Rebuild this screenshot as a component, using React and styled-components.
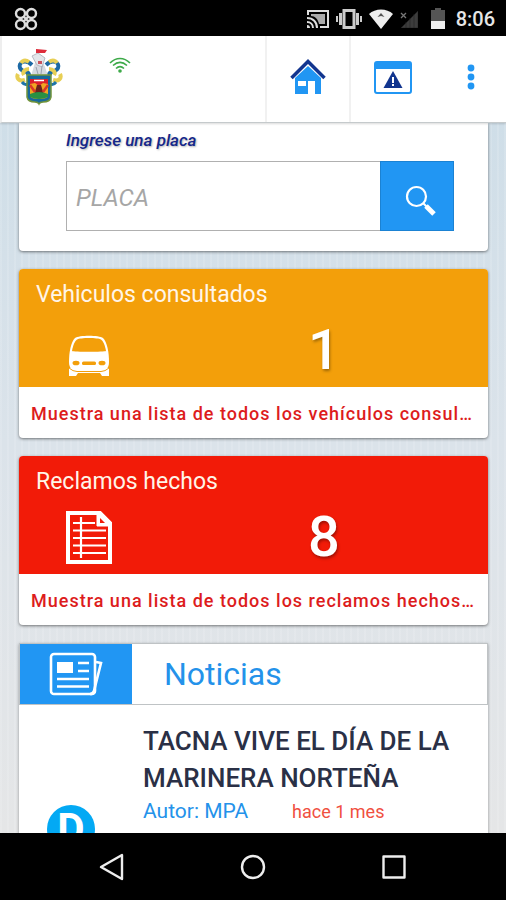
import React from "react";
import styled, { createGlobalStyle } from "styled-components";

const GlobalStyle = createGlobalStyle`
  * { box-sizing: border-box; }
  body { margin: 0; font-family: Roboto, "Noto Sans", sans-serif; }
  button, input { font: inherit; }
  h2, h3, p { margin: 0; }
  svg { display: block; }
`;

const Screen = styled.div`
  display: flex;
  flex-direction: column;
  height: 100vh;
  background: #000;
`;

const StatusBar = styled.div`
  display: flex;
  flex: none;
  align-items: center;
  justify-content: space-between;
  height: 36px;
  padding: 2px 11px 0 13px;
  background: #000;
  color: #e6e6e6;
`;

const StatusIcons = styled.div`
  display: flex;
  align-items: center;
  gap: 6px;
`;

const Clock = styled.time`
  font-size: 20px;
  font-weight: 500;
  line-height: 24px;
`;

const AppBar = styled.header`
  position: relative;
  z-index: 1;
  display: flex;
  flex: none;
  height: 87px;
  background: #fff;
  border-left: 2px solid #eee;
  border-bottom: 1px solid #c5cacc;
  box-shadow: 0 1px 2px rgba(0, 0, 0, 0.15);
`;

const Brand = styled.div`
  display: flex;
  flex: 1;
  align-items: flex-start;
  gap: 45px;
  padding: 12px 0 0 12px;
`;

const Signal = styled.span`
  padding-top: 9px;
`;

const BarButton = styled.button`
  display: flex;
  align-items: center;
  justify-content: center;
  width: ${(p) => p.$width}px;
  padding: 0 0 4px;
  background: none;
  border: 0;
  border-left: ${(p) => (p.$divided ? "2px solid #f1f1f1" : "0")};
`;

const Content = styled.main`
  display: flex;
  flex: 1;
  flex-direction: column;
  gap: 18px;
  min-height: 0;
  overflow-y: auto;
  scrollbar-width: none;
  padding: 0 18px 0 19px;
  background:
    repeating-linear-gradient(90deg, rgba(255, 255, 255, 0.12) 0 2px, transparent 2px 7px),
    linear-gradient(#cfdee8, #dbe3ea 45%, #e5e6e7);
`;

const cardShadow = "0 1px 3px rgba(0, 0, 0, 0.5)";

const SearchCard = styled.form`
  flex: none;
  padding: 7px 34px 20px 47px;
  background: #fff;
  border-radius: 0 0 4px 4px;
  box-shadow: ${cardShadow};
`;

const SearchLabel = styled.label`
  display: block;
  margin-bottom: 11px;
  color: #14278a;
  font-size: 17px;
  font-style: italic;
  font-weight: 500;
  line-height: 20px;
  text-shadow: 1px 1px 2px rgba(0, 0, 0, 0.3);
`;

const SearchRow = styled.div`
  display: flex;
  height: 70px;
`;

const PlateInput = styled.input`
  flex: 1;
  min-width: 0;
  padding: 4px 9px 0;
  background: #fff;
  border: 1px solid #b0b0b0;
  border-right: 0;
  border-radius: 0;
  color: #555;
  font-size: 24px;
  font-style: italic;
  outline: 0;

  &::placeholder {
    color: #a6a6a6;
    opacity: 1;
  }
`;

const SearchButton = styled.button`
  display: flex;
  align-items: center;
  justify-content: center;
  width: 74px;
  padding: 10px 0 0 8px;
  background: #2196f3;
  border: 1px solid #1b82d3;
`;

const StatCard = styled.section`
  flex: none;
  overflow: hidden;
  background: #fff;
  border-radius: 4px;
  box-shadow: ${cardShadow};
`;

const StatHead = styled.div`
  height: 118px;
  padding-top: 13px;
  background: ${(p) => p.$color};
  color: #fff;
`;

const StatTitle = styled.h2`
  padding: 0 17px;
  color: #fff5e8;
  font-size: 23px;
  font-weight: 400;
  line-height: 26px;
`;

const StatBody = styled.div`
  display: grid;
  grid-template-columns: 3fr 7fr;
  align-items: end;
  justify-items: center;
  height: 69px;
`;

const StatValue = styled.strong`
  font-size: 56px;
  font-weight: 500;
  line-height: 54px;
  text-shadow: 1px 2px 3px rgba(0, 0, 0, 0.35);
`;

const StatLink = styled.a`
  display: block;
  overflow: hidden;
  padding: 3px 8px 0 12px;
  color: #dd1c1c;
  font-size: 18px;
  font-weight: 500;
  letter-spacing: 1px;
  line-height: 48px;
  text-decoration: none;
  text-overflow: ellipsis;
  white-space: nowrap;
`;

const NewsCard = styled.section`
  flex: none;
  background: #fff;
  box-shadow: 0 1px 3px rgba(0, 0, 0, 0.35);
`;

const NewsHead = styled.div`
  display: flex;
  height: 62px;
  border: 1px solid #bfc3c5;
`;

const NewsIconCell = styled.div`
  display: flex;
  align-items: center;
  justify-content: center;
  width: 112px;
  background: #2196f3;
`;

const NewsHeading = styled.h2`
  padding-left: 32px;
  color: #2492ea;
  font-size: 32px;
  font-weight: 400;
  line-height: 60px;
`;

const Article = styled.article`
  display: grid;
  grid-template-columns: 124px 1fr;
  padding: 18px 20px 24px 0;
`;

const Avatar = styled.div`
  display: flex;
  align-items: center;
  justify-content: center;
  width: 48px;
  height: 48px;
  margin: 82px 0 0 28px;
  background: #03a9f4;
  border-radius: 50%;
  color: #fff;
  font-size: 42px;
  font-weight: 700;
  line-height: 48px;
`;

const ArticleTitle = styled.h3`
  color: #2a3046;
  font-size: 26px;
  font-weight: 500;
  line-height: 37px;
`;

const Meta = styled.p`
  display: flex;
  align-items: baseline;
  gap: 44px;
  line-height: 28px;
`;

const Author = styled.span`
  color: #2492ea;
  font-size: 21px;
`;

const Age = styled.time`
  color: #f0503f;
  font-size: 18px;
`;

const NavBar = styled.nav`
  display: flex;
  flex: none;
  align-items: center;
  justify-content: center;
  gap: 93px;
  height: 67px;
  background: #000;
`;

const NavButton = styled.button`
  display: flex;
  align-items: center;
  justify-content: center;
  width: 48px;
  height: 48px;
  padding: 0;
  background: none;
  border: 0;
`;

const CloverIcon = () => (
  <svg width="26" height="24" viewBox="0 0 26 24" fill="none" stroke="#ddd" strokeWidth="2.4">
    <ellipse cx="7.500" cy="6.500" rx="4.500" ry="4.500" />
    <ellipse cx="18.500" cy="6.500" rx="4.500" ry="4.500" />
    <ellipse cx="7.500" cy="17.500" rx="4.500" ry="4.500" />
    <ellipse cx="18.500" cy="17.500" rx="4.500" ry="4.500" />
    <path d="M10 9l6 6M16 9l-6 6" />
  </svg>
);

const CastIcon = () => (
  <svg width="24" height="20" viewBox="0 0 24 20" fill="none" stroke="#ddd" strokeWidth="2">
    <path d="M2 6V2h20v16h-8" />
    <path d="M5 5h14v10h-6C12 10 9 7 5 7z" fill="#aaa" stroke="none" />
    <path d="M1 9c6 0 10 4 10 10M1 13c3.500 0 6 2.500 6 6" />
    <path d="M1 16c2 0 3 1 3 3H1z" fill="#ddd" stroke="none" />
  </svg>
);

const VibrateIcon = () => (
  <svg width="26" height="20" viewBox="0 0 26 20" fill="none" stroke="#ccc">
    <rect x="8" y="1.500" width="10" height="17" strokeWidth="3" />
    <path d="M4.500 4v12M21.500 4v12" strokeWidth="3" />
    <path d="M1 7v6M25 7v6" strokeWidth="2" />
  </svg>
);

const StatusWifiIcon = () => (
  <svg width="26" height="20" viewBox="0 0 26 20">
    <path d="M1 5C7-1 19-1 25 5L13 20z" fill="#eee" />
    <path d="M9.500 8L13 4l3.500 4-3.500-1z" fill="#555" />
  </svg>
);

const NoSignalIcon = () => (
  <svg width="18" height="18" viewBox="0 0 18 18">
    <path d="M18 1v17H1zM6 18V12M10 18V8M14 18V4" fill="#3c3c3c" stroke="#222" strokeWidth="0.600" />
    <path d="M1 3l5 5M6 3L1 8" stroke="#777" strokeWidth="1.300" />
  </svg>
);

const BatteryIcon = () => (
  <svg width="26" height="22" viewBox="0 0 26 22">
    <path d="M11 0h6v2h4v11H7V2h4z" fill="#555" />
    <path d="M7 13h14v8H7z" fill="#eee" />
  </svg>
);

const CrestIcon = () => (
  <svg width="50" height="58" viewBox="0 0 50 58">
    <g fill="none" strokeWidth="4">
      <path d="M18 17c-7-7-14-2-12 3s9 2 9 7" stroke="#1c69a5" />
      <path d="M32 17c7-7 14-2 12 3s-9 2-9 7" stroke="#1c69a5" />
      <path d="M15 14c-4-3-7-1-8 1M4 26c-2 4 1 8 7 6M15 21c-4 0-7 3-5 6" stroke="#e8cf55" />
      <path d="M35 14c4-3 7-1 8 1M46 26c2 4-1 8-7 6M35 21c4 0 7 3 5 6" stroke="#e8cf55" />
      <path d="M8 34c3 4 6 3 8-1M42 34c-3 4-6 3-8-1M13 25l3 5M37 25l-3 5" stroke="#1d74a8" strokeWidth="3" />
    </g>
    <path d="M17 28l3-10 2-6 6 0 3 7 3 9z" fill="#d5d9e0" />
    <path d="M18 8l6-3 7 5-3 9-5-2z" fill="#e3e6ea" stroke="#b6bac3" />
    <path d="M22 5V1l11 1-2 3z" fill="#dd2c3b" />
    <path d="M22 19l2 7M28 18l-1 8" stroke="#9aa1ae" />
    <path d="M24 13h4v3h-4z" fill="#ca525a" />
    <path d="M13 27h24v22q-1 5-8 5-3 0-4 2-1-2-4-2-7 0-8-5z" fill="#17699c" stroke="#71943b" strokeWidth="1.500" />
    <path d="M16 31h18v17q-1 3-9 3t-9-3z" fill="#f0a522" />
    <path d="M16 31h18v5l-5-1-4 3-4-3-5 1z" fill="#dc202b" />
    <path d="M20 32.500h10" stroke="#fff" strokeWidth="1.500" />
    <path d="M23 37h4l3 10H20z" fill="#6d221c" />
    <path d="M16 37l5 7M34 37l-5 7" stroke="#da3627" strokeWidth="2.500" />
    <path d="M16 46q9-4 18 0v3q-9 4-18 0z" fill="#299044" />
  </svg>
);

const GreenWifiIcon = () => (
  <svg width="22" height="17" viewBox="0 0 22 17" fill="none" stroke="#3daa49" strokeWidth="1.600">
    <path d="M1 6C7 0 15 0 21 6M4 8.500c4.500-4 9.500-4 14 0M7 11.500c2.500-2.300 5.500-2.300 8 0" />
    <circle cx="11" cy="14" r="1.800" fill="#3daa49" stroke="none" />
  </svg>
);

const HomeIcon = () => (
  <svg width="36" height="36" viewBox="0 0 36 36">
    <path d="M18 7L5 19v16h13V22h7v13h6V19z" fill="#2196f3" />
    <path d="M8 22h8v5H8z" fill="#fff" />
    <path d="M1.500 19L18 2.500 34.500 19" fill="none" stroke="#12358f" strokeWidth="3.500" />
  </svg>
);

const AlertWindowIcon = () => (
  <svg width="38" height="33" viewBox="0 0 38 33">
    <rect x="1" y="1" width="36" height="31" rx="2" fill="#fff" stroke="#2196f3" strokeWidth="2" />
    <path d="M1 1h36v7H1z" fill="#2196f3" />
    <path d="M19 10l9.500 17h-19z" fill="#12358f" />
    <path d="M18 16h2v6h-2zM18 23h2v2h-2z" fill="#fff" />
  </svg>
);

const MoreIcon = () => (
  <svg width="8" height="26" viewBox="0 0 8 26" fill="#2196f3">
    <circle cx="4" cy="4" r="3.400" />
    <circle cx="4" cy="13" r="3.400" />
    <circle cx="4" cy="22" r="3.400" />
  </svg>
);

const SearchIcon = () => (
  <svg width="32" height="32" viewBox="0 0 32 32" fill="none" stroke="#fff">
    <circle cx="11.500" cy="11.500" r="9.500" strokeWidth="2.200" />
    <path d="M18 18l4 4" strokeWidth="2" />
    <path d="M21 21l8 8" strokeWidth="5" />
  </svg>
);

const CarIcon = () => (
  <svg width="42" height="42" viewBox="0 0 42 42">
    <path d="M1 33h7l3 3h20l3-3h7v8h-7l-2-3H10l-2 3H1z" fill="#fff" />
    <path d="M1 27C1 17 3 7 7 3 11 0 31 0 35 3c4 4 6 14 6 24 0 7-4 9-9 9H10c-5 0-9-2-9-9z" fill="#fff" />
    <path d="M4 16C5 10 7 6 9 4.500c3-2 21-2 24 0C35 6 37 10 38 16c-1 1-33 1-34 0z" fill="#f39f0a" />
    <ellipse cx="8" cy="28" rx="3.500" ry="2.300" fill="#f39f0a" />
    <ellipse cx="34" cy="28" rx="3.500" ry="2.300" fill="#f39f0a" />
    <rect x="14" y="26.500" width="14" height="3.600" rx="1.500" fill="#f39f0a" />
    <path d="M1 33q4 3.500 8 3.500h24q4 0 8-3.500" fill="none" stroke="#f39f0a" />
  </svg>
);

const ClaimIcon = () => (
  <svg width="46" height="53" viewBox="0 0 46 53" fill="none" stroke="#fff">
    <path d="M2 2h32l10 10v39H2z" strokeWidth="4" />
    <path d="M31 2v13h13L33 4z" fill="#fff" strokeWidth="1" />
    <path d="M34 7v5h5z" fill="#f21b08" stroke="none" />
    <path d="M7 12h22M7 19.500h33M7 27h33M7 34.500h33M7 42h33M15 6v41" strokeWidth="2.200" />
  </svg>
);

const NewspaperIcon = () => (
  <svg width="54" height="44" viewBox="0 0 54 44" fill="none" stroke="#fff" strokeWidth="2.600">
    <rect x="2" y="2" width="44" height="40" rx="3" />
    <path d="M47 10l5 1-7 28q-1 3-4 3" />
    <path d="M8 10h16v11H8z" fill="#fff" stroke="none" />
    <path d="M29 11h11M29 19h11M8 27h32M8 34.500h32" strokeWidth="2.400" />
  </svg>
);

const NavIcon = ({ children }) => (
  <svg width="28" height="28" viewBox="0 0 28 28" fill="none" stroke="#eee" strokeWidth="2.400" strokeLinejoin="round">
    {children}
  </svg>
);

const stats = [
  {
    title: "Vehiculos consultados",
    value: 1,
    color: "#f39f0a",
    Icon: CarIcon,
    link: "Muestra una lista de todos los vehículos consul…",
  },
  {
    title: "Reclamos hechos",
    value: 8,
    color: "#f21b08",
    Icon: ClaimIcon,
    link: "Muestra una lista de todos los reclamos hechos…",
  },
];

export default function App() {
  return (
    <Screen>
      <GlobalStyle />
      <StatusBar>
        <CloverIcon />
        <StatusIcons>
          <CastIcon />
          <VibrateIcon />
          <StatusWifiIcon />
          <NoSignalIcon />
          <BatteryIcon />
          <Clock>8:06</Clock>
        </StatusIcons>
      </StatusBar>

      <AppBar>
        <Brand>
          <CrestIcon />
          <Signal>
            <GreenWifiIcon />
          </Signal>
        </Brand>
        <BarButton type="button" aria-label="Inicio" $width={84} $divided>
          <HomeIcon />
        </BarButton>
        <BarButton type="button" aria-label="Avisos" $width={86} $divided>
          <AlertWindowIcon />
        </BarButton>
        <BarButton type="button" aria-label="Más opciones" $width={71}>
          <MoreIcon />
        </BarButton>
      </AppBar>

      <Content>
        <SearchCard onSubmit={(e) => e.preventDefault()}>
          <SearchLabel htmlFor="placa">Ingrese una placa</SearchLabel>
          <SearchRow>
            <PlateInput id="placa" type="text" placeholder="PLACA" />
            <SearchButton type="submit" aria-label="Buscar">
              <SearchIcon />
            </SearchButton>
          </SearchRow>
        </SearchCard>

        {stats.map(({ title, value, color, Icon, link }) => (
          <StatCard key={title}>
            <StatHead $color={color}>
              <StatTitle>{title}</StatTitle>
              <StatBody>
                <Icon />
                <StatValue>{value}</StatValue>
              </StatBody>
            </StatHead>
            <StatLink href="#">{link}</StatLink>
          </StatCard>
        ))}

        <NewsCard>
          <NewsHead>
            <NewsIconCell>
              <NewspaperIcon />
            </NewsIconCell>
            <NewsHeading>Noticias</NewsHeading>
          </NewsHead>
          <Article>
            <Avatar>D</Avatar>
            <div>
              <ArticleTitle>TACNA VIVE EL DÍA DE LA MARINERA NORTEÑA</ArticleTitle>
              <Meta>
                <Author>Autor: MPA</Author>
                <Age>hace 1 mes</Age>
              </Meta>
            </div>
          </Article>
        </NewsCard>
      </Content>

      <NavBar>
        <NavButton type="button" aria-label="Atrás">
          <NavIcon>
            <path d="M24 2v24L3 14z" />
          </NavIcon>
        </NavButton>
        <NavButton type="button" aria-label="Pantalla de inicio">
          <NavIcon>
            <circle cx="14" cy="14" r="11" />
          </NavIcon>
        </NavButton>
        <NavButton type="button" aria-label="Recientes">
          <NavIcon>
            <rect x="3.500" y="3.500" width="21" height="21" />
          </NavIcon>
        </NavButton>
      </NavBar>
    </Screen>
  );
}
